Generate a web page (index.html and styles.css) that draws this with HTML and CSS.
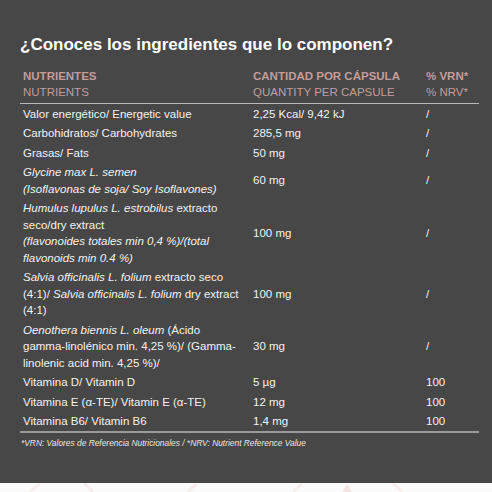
FILE: index.html
```html
<!DOCTYPE html>
<html lang="es">
<head>
    <meta charset="UTF-8">
    <meta name="viewport" content="width=device-width, initial-scale=1.0">
    <title>Ingredientes</title>
    <link rel="stylesheet" href="styles.css">
</head>
<body>
    <div class="panel">
        <h2 class="title">¿Conoces los ingredientes que lo componen?</h2>

        <table class="nutri">
            <thead>
                <tr>
                    <th class="col-name">NUTRIENTES<br><span>NUTRIENTS</span></th>
                    <th class="col-qty">CANTIDAD POR CÁPSULA<br><span>QUANTITY PER CAPSULE</span></th>
                    <th class="col-vrn">% VRN*<br><span>% NRV*</span></th>
                </tr>
            </thead>
            <tbody>
                <tr>
                    <td>Valor energético/ Energetic value</td>
                    <td>2,25 Kcal/ 9,42 kJ</td>
                    <td>/</td>
                </tr>
                <tr>
                    <td>Carbohidratos/ Carbohydrates</td>
                    <td>285,5 mg</td>
                    <td>/</td>
                </tr>
                <tr>
                    <td>Grasas/ Fats</td>
                    <td>50 mg</td>
                    <td>/</td>
                </tr>
                <tr>
                    <td><i>Glycine max L. semen<br>(Isoflavonas de soja/ Soy Isoflavones)</i></td>
                    <td>60 mg</td>
                    <td>/</td>
                </tr>
                <tr>
                    <td><i>Humulus lupulus L. estrobilus</i> extracto seco/dry extract<br><i>(flavonoides totales min 0,4 %)/(total flavonoids min 0.4 %)</i></td>
                    <td>100 mg</td>
                    <td>/</td>
                </tr>
                <tr>
                    <td><i>Salvia officinalis L. folium</i> extracto seco (4:1)/ <i>Salvia officinalis L. folium</i> dry extract (4:1)</td>
                    <td>100 mg</td>
                    <td>/</td>
                </tr>
                <tr>
                    <td><i>Oenothera biennis L. oleum</i> (Ácido gamma-linolénico min. 4,25 %)/ (Gamma-linolenic acid min. 4,25 %)/</td>
                    <td>30 mg</td>
                    <td>/</td>
                </tr>
                <tr>
                    <td>Vitamina D/ Vitamin D</td>
                    <td>5 µg</td>
                    <td>100</td>
                </tr>
                <tr>
                    <td>Vitamina E (α-TE)/ Vitamin E (α-TE)</td>
                    <td>12 mg</td>
                    <td>100</td>
                </tr>
                <tr>
                    <td>Vitamina B6/ Vitamin B6</td>
                    <td>1,4 mg</td>
                    <td>100</td>
                </tr>
            </tbody>
        </table>

        <p class="note">*VRN: Valores de Referencia Nutricionales / *NRV: Nutrient Reference Value</p>
    </div>
    <div class="strip">
        <svg width="492" height="9" viewBox="0 0 492 9">
            <g stroke="#f7eded" stroke-width="3" fill="none">
                <line x1="30" y1="9" x2="40" y2="0"/>
                <line x1="84" y1="0" x2="93" y2="9"/>
                <line x1="188" y1="9" x2="197" y2="0"/>
                <line x1="293" y1="9" x2="302" y2="0"/>
                <line x1="393" y1="0" x2="402" y2="9"/>
            </g>
            <polygon points="347,1 342,9 352,9" fill="#f5e6e6"/>
        </svg>
    </div>
</body>
</html>
```

FILE: styles.css
```css
body {
    margin: 0;
    font-family: "Liberation Sans", Arial, sans-serif;
    background-color: #ffffff;
}

.panel {
    background-color: #474747;
    color: #f2f2f2;
    height: 483px;
    padding: 0 13px 0 20px;
    box-sizing: border-box;
    overflow: hidden;
}

.title {
    margin: 0;
    padding-top: 34px;
    font-size: 17px;
    font-weight: bold;
    line-height: 22px;
    color: #ffffff;
}

.nutri {
    width: 100%;
    margin-top: 12px;
    border-collapse: collapse;
    font-size: 11.5px;
}

.nutri th {
    text-align: left;
    font-weight: bold;
    color: #c49c9a;
    line-height: 16px;
    padding: 0 3px 3px;
    vertical-align: top;
}

.nutri th span {
    font-weight: normal;
}

.nutri thead tr {
    border-bottom: 1px solid #b9b9b9;
}

.nutri tbody tr:last-child {
    border-bottom: 2px solid #9a9a9a;
}

.col-name {
    width: 221px;
}

.nutri th.col-name,
.nutri td:first-child {
    padding-right: 6px;
}

.col-qty {
    width: 167px;
}

.nutri td {
    padding: 1.5px 3px;
    line-height: 16.5px;
    vertical-align: middle;
}

.note {
    margin: 5px 0 0 1px;
    font-size: 8.4px;
    font-style: italic;
    color: #e8e8e8;
}

.strip {
    height: 9px;
    overflow: hidden;
    background-color: #fbfbfb;
}

.strip svg {
    display: block;
}
```
